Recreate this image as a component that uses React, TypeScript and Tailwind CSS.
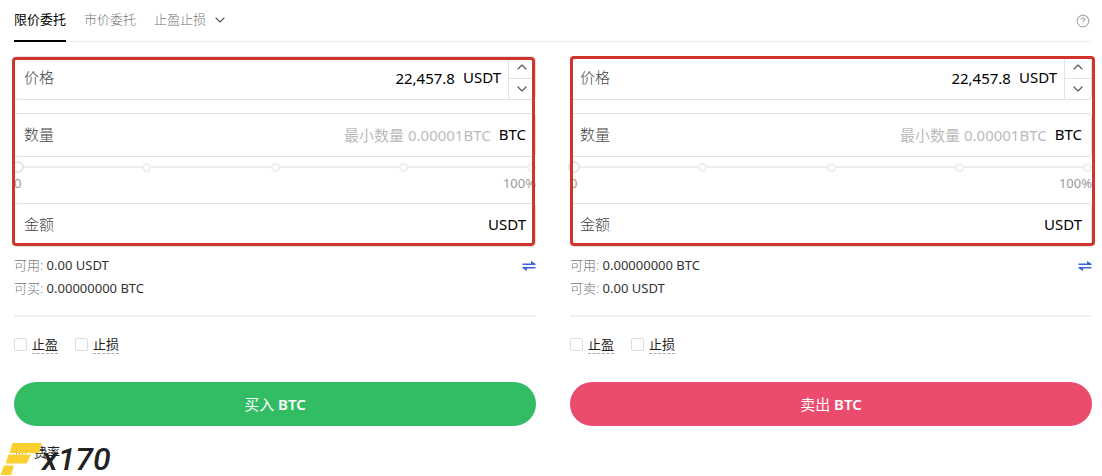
import React, { useState } from 'react';
import { ChevronDown, ChevronUp, CircleHelp } from 'lucide-react';

interface OrderFormProps {
  side: 'buy' | 'sell';
  available: string;
  maxLabel: string;
  max: string;
  frameClass: string;
}

const tabs = ['限价委托', '市价委托', '止盈止损'];

const SwapIcon = () => (
  <svg viewBox="0 0 14 10" className="w-3.5 h-2.5" fill="#3a66dc">
    <path d="M0.5 2.500H9V0L13.500 2.800V4H0.500Z" />
    <path d="M13.500 7.500H5V10L0.500 7.200V6H13.500Z" />
  </svg>
);

const OrderForm = ({ side, available, maxLabel, max, frameClass }: OrderFormProps) => {
  const [price, setPrice] = useState('22,457.8');
  const [amount, setAmount] = useState('');
  const [total, setTotal] = useState('');
  const [percent, setPercent] = useState(0);

  const step = (delta: number) => {
    const next = Number(price.replace(/,/g, '')) + delta;
    setPrice(next.toLocaleString('en-US', { minimumFractionDigits: 1, maximumFractionDigits: 1 }));
  };

  return (
    <form className="flex-1 min-w-0" onSubmit={(e) => e.preventDefault()}>
      <div className="relative">
        <div className="flex h-11 border border-[#e2e2e2] rounded text-[15px]">
          <label htmlFor={`${side}-price`} className="flex items-center pl-[9px] pb-0.5 font-light text-[#444]">价格</label>
          <input
            id={`${side}-price`}
            value={price}
            onChange={(e) => setPrice(e.target.value)}
            className="flex-1 min-w-0 text-right outline-none text-black"
          />
          <span className="flex items-center pl-2 pr-[7px] pb-0.5 text-black">USDT</span>
          <div className="flex flex-col w-[27px] border-l border-[#e2e2e2] text-[#555]">
            <button type="button" aria-label="+" onClick={() => step(0.1)} className="flex-1 flex items-center justify-center border-b border-[#e2e2e2]">
              <ChevronUp className="w-4 h-4" strokeWidth={1.75} />
            </button>
            <button type="button" aria-label="-" onClick={() => step(-0.1)} className="flex-1 flex items-center justify-center">
              <ChevronDown className="w-4 h-4" strokeWidth={1.75} />
            </button>
          </div>
        </div>

        <div className="flex h-11 mt-[13px] border border-[#e2e2e2] rounded text-[15px]">
          <label htmlFor={`${side}-amount`} className="flex items-center pl-[9px] pb-0.5 font-light text-[#444]">数量</label>
          <input
            id={`${side}-amount`}
            value={amount}
            onChange={(e) => setAmount(e.target.value)}
            placeholder="最小数量 0.00001BTC"
            className="flex-1 min-w-0 text-right outline-none text-black placeholder:text-[#bbb]"
          />
          <span className="flex items-center pl-2 pr-[9px] pb-0.5 text-black">BTC</span>
        </div>

        {/* Percent slider */}
        <div className="relative h-3 mt-1">
          <div className="absolute inset-0 flex items-center">
            <div className="w-full h-0.5 bg-[#eee]"></div>
          </div>
          <div className="absolute inset-0 flex items-center justify-between">
            {[0, 25, 50, 75, 100].map((mark) => (
              <span key={mark} className="w-[9px] h-[9px] rounded-full bg-white border-2 border-[#eee]"></span>
            ))}
          </div>
          <input
            type="range"
            aria-label="%"
            min={0}
            max={100}
            value={percent}
            onChange={(e) => setPercent(Number(e.target.value))}
            className="relative block w-full h-3 -ml-0.5 appearance-none bg-transparent [&::-webkit-slider-thumb]:appearance-none [&::-webkit-slider-thumb]:w-3 [&::-webkit-slider-thumb]:h-3 [&::-webkit-slider-thumb]:rounded-full [&::-webkit-slider-thumb]:bg-white [&::-webkit-slider-thumb]:border-2 [&::-webkit-slider-thumb]:border-[#e2e2e2]"
          />
        </div>
        <div className="flex justify-between h-5 text-[13px] leading-5 text-[#999]">
          <span>0</span>
          <span>100%</span>
        </div>

        <div className="flex h-11 mt-2.5 border border-[#e2e2e2] rounded text-[15px]">
          <label htmlFor={`${side}-total`} className="flex items-center pl-[9px] pb-0.5 font-light text-[#444]">金额</label>
          <input
            id={`${side}-total`}
            value={total}
            onChange={(e) => setTotal(e.target.value)}
            className="flex-1 min-w-0 text-right outline-none text-black"
          />
          <span className="flex items-center pl-2 pr-[9px] pb-0.5 text-black">USDT</span>
        </div>

        {/* Highlight frame */}
        <div className={`absolute bottom-px border-3 border-[#d0342a] rounded pointer-events-none ${frameClass}`}></div>
      </div>

      <div className="flex items-start justify-between mt-[7px] text-[13px] leading-[23px] text-[#333]">
        <div>
          <p><span className="font-light text-[#777]">可用:</span> {available}</p>
          <p><span className="font-light text-[#777]">{maxLabel}:</span> {max}</p>
        </div>
        <button type="button" aria-label="划转" className="flex items-center h-[23px]">
          <SwapIcon />
        </button>
      </div>

      <div className="flex gap-[17px] mt-[15px] pt-[15px] border-t-2 border-[#f0f0f0] text-[13px] text-[#222]">
        {['止盈', '止损'].map((name) => (
          <label key={name} className="flex items-center gap-[5px] h-6">
            <input type="checkbox" className="w-[13px] h-[13px] appearance-none border border-[#ddd] rounded-xs bg-white checked:bg-[#333]" />
            <span className="leading-[18px] border-b border-dashed border-[#aaa]">{name}</span>
          </label>
        ))}
      </div>

      <button
        type="submit"
        className={`w-full h-11 mt-[26px] rounded-full text-white text-[15px] ${side === 'buy' ? 'bg-[#32bd65]' : 'bg-[#eb4b6d]'}`}
      >
        {side === 'buy' ? '买入' : '卖出'} <span className="font-semibold">BTC</span>
      </button>
    </form>
  );
};

export default function App() {
  const [active, setActive] = useState(0);

  return (
    <div className="pl-3.5 pr-2.5 bg-white overflow-hidden font-['Noto_Sans','Noto_Sans_CJK_SC',sans-serif]">
      <nav className="flex items-stretch justify-between h-[42px] border-b border-[#eee]">
        <div className="flex gap-[18px] text-[13px]">
          {tabs.map((tab, i) => (
            <button
              key={tab}
              onClick={() => setActive(i)}
              className={`flex items-center gap-1.5 -mb-px border-b-2 ${i === active ? 'border-black text-black' : 'border-transparent font-light text-[#777]'}`}
            >
              {tab}
              {i === 2 && <ChevronDown className="w-4 h-4 text-[#555]" strokeWidth={1.75} />}
            </button>
          ))}
        </div>
        <button aria-label="帮助" className="flex items-center pr-0.5">
          <CircleHelp className="w-3.5 h-3.5 text-[#aaa]" />
        </button>
      </nav>

      <div className="flex gap-[34px] mt-3.5">
        <OrderForm side="buy" available="0.00 USDT" maxLabel="可买" max="0.00000000 BTC" frameClass="top-px -left-0.5 right-px" />
        <OrderForm side="sell" available="0.00000000 BTC" maxLabel="可卖" max="0.00 USDT" frameClass="top-0 left-0 -right-[3px]" />
      </div>

      <footer className="relative h-[50px] pt-4 pl-5 text-[13px] leading-5 text-[#222]">
        费率
        {/* Logo mark sits over the fee link */}
        <div className="absolute top-[17px] -left-3.5 flex">
          <svg viewBox="0 0 42 33" className="w-[42px] h-[33px]" fill="#f9d02f">
            <path d="M12.500 0H42L39 10H9.500Z" />
            <path d="M8.500 11.500H31L26.500 20.500H5.500Z" />
            <path d="M4 22.500H14L11 32H0.500Z" />
            <path d="M16 10.500H28" stroke="#c98a4a" strokeDasharray="1 2" />
          </svg>
          <span className="font-['Roboto'] text-[32px] leading-8 italic font-medium text-[#222]">x170</span>
        </div>
      </footer>
    </div>
  );
}
